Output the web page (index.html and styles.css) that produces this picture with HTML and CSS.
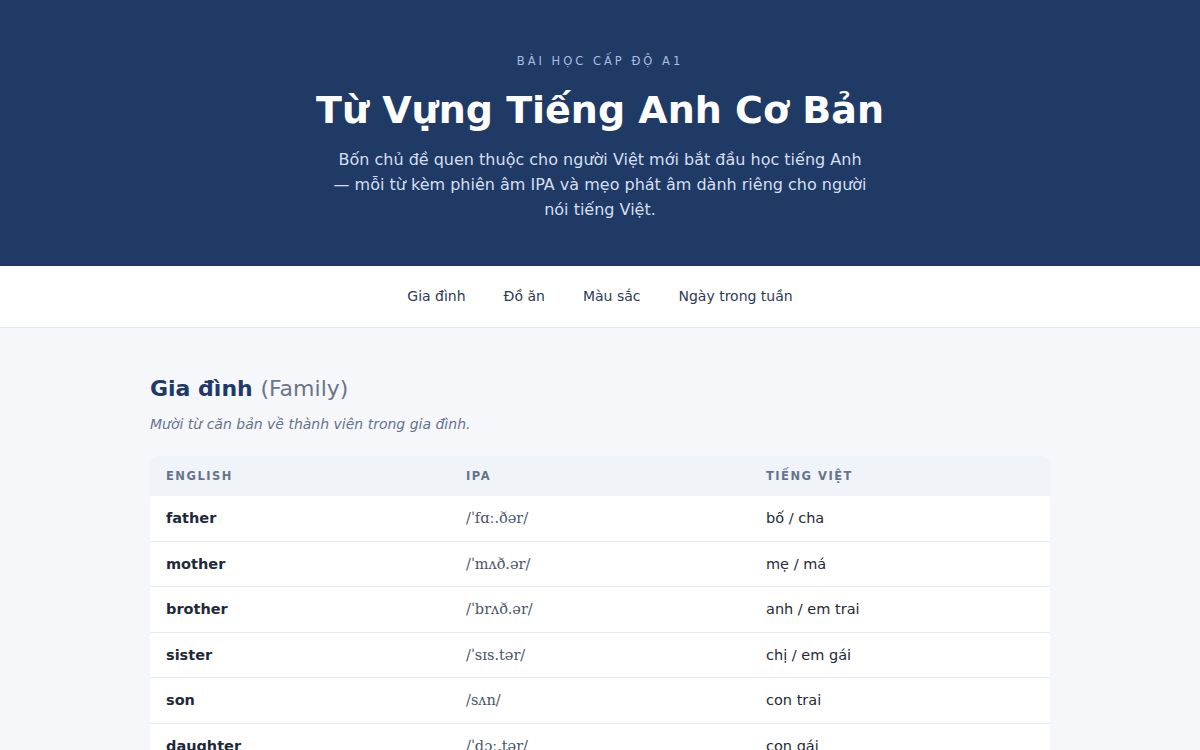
FILE: index.html
```html
<!DOCTYPE html>
<html lang="vi">
<head>
<meta charset="utf-8">
<title>Từ Vựng Tiếng Anh Cơ Bản</title>
<link rel="stylesheet" href="styles.css">
</head>
<body>
<header class="hero">
  <p class="kicker">Bài học cấp độ A1</p>
  <h1 class="title">Từ Vựng Tiếng Anh Cơ Bản</h1>
  <p class="lead">Bốn chủ đề quen thuộc cho người Việt mới bắt đầu học tiếng Anh — mỗi từ kèm phiên âm IPA và mẹo phát âm dành riêng cho người nói tiếng Việt.</p>
</header>
<nav class="topics">
  <a href="#family">Gia đình</a>
  <a href="#food">Đồ ăn</a>
  <a href="#colors">Màu sắc</a>
  <a href="#days">Ngày trong tuần</a>
</nav>
<main class="content">
  <section class="topic" id="family">
    <h2 class="topic-title">Gia đình <span class="topic-en">(Family)</span></h2>
    <p class="topic-desc">Mười từ căn bản về thành viên trong gia đình.</p>
    <div class="card">
      <table class="vocab">
        <thead>
          <tr><th>English</th><th>IPA</th><th>Tiếng Việt</th></tr>
        </thead>
        <tbody>
          <tr><td class="en">father</td><td class="ipa">/ˈfɑː.ðər/</td><td class="vi">bố / cha</td></tr>
          <tr><td class="en">mother</td><td class="ipa">/ˈmʌð.ər/</td><td class="vi">mẹ / má</td></tr>
          <tr><td class="en">brother</td><td class="ipa">/ˈbrʌð.ər/</td><td class="vi">anh / em trai</td></tr>
          <tr><td class="en">sister</td><td class="ipa">/ˈsɪs.tər/</td><td class="vi">chị / em gái</td></tr>
          <tr><td class="en">son</td><td class="ipa">/sʌn/</td><td class="vi">con trai</td></tr>
          <tr><td class="en">daughter</td><td class="ipa">/ˈdɔː.tər/</td><td class="vi">con gái</td></tr>
          <tr><td class="en">grandfather</td><td class="ipa">/ˈɡræn.fɑː.ðər/</td><td class="vi">ông</td></tr>
          <tr><td class="en">grandmother</td><td class="ipa">/ˈɡræn.mʌð.ər/</td><td class="vi">bà</td></tr>
        </tbody>
      </table>
    </div>
  </section>
</main>
</body>
</html>
```

FILE: styles.css
```css
* { box-sizing: border-box; }
html, body { margin: 0; padding: 0; }
body {
  font-family: "DejaVu Sans", "Noto Sans", sans-serif;
  background: #f5f7fb;
  color: #1f2937;
}
.hero {
  background: #203a66;
  text-align: center;
  padding: 53px 20px 44px;
}
.kicker {
  margin: 0;
  font-size: 11.5px;
  line-height: 16px;
  letter-spacing: 3px;
  text-transform: uppercase;
  color: #a9bde0;
}
.title {
  margin: 17px 0 13px;
  font-size: 38px;
  line-height: 48px;
  font-weight: 700;
  color: #ffffff;
}
.lead {
  margin: 0 auto;
  max-width: 540px;
  font-size: 16px;
  line-height: 25px;
  color: #d5dff0;
}
.topics {
  background: #ffffff;
  border-bottom: 1px solid #e2e8f0;
  display: flex;
  justify-content: center;
  gap: 38px;
  padding: 20px 0 21px;
}
.topics a {
  font-size: 14px;
  line-height: 20px;
  color: #2d3a55;
  text-decoration: none;
}
.content {
  width: 900px;
  margin: 0 auto;
  padding-top: 46px;
}
.topic-title {
  margin: 0;
  font-size: 22px;
  line-height: 30px;
  font-weight: 700;
  color: #1f3a68;
}
.topic-en {
  font-weight: 400;
  color: #6b7587;
}
.topic-desc {
  margin: 10px 0 22px;
  font-size: 14px;
  line-height: 20px;
  font-style: italic;
  color: #64748b;
}
.card {
  background: #ffffff;
  border-radius: 8px;
  box-shadow: 0 1px 2px rgba(15, 23, 42, 0.04);
  overflow: hidden;
}
.vocab {
  width: 100%;
  border-collapse: collapse;
  table-layout: fixed;
}
.vocab th {
  background: #f0f4f9;
  text-align: left;
  font-size: 11.5px;
  line-height: 16px;
  font-weight: 700;
  letter-spacing: 1.5px;
  text-transform: uppercase;
  color: #64748b;
  padding: 12px 16px;
}
.vocab td {
  padding: 12px 16px;
  font-size: 14.5px;
  line-height: 20.5px;
  border-top: 1px solid #e8edf3;
}
.vocab tbody tr:first-child td { border-top: none; }
.en { font-weight: 700; color: #1e293b; }
.ipa {
  font-family: "DejaVu Serif", serif;
  font-size: 14.5px;
  color: #475569;
}
.vi { color: #1f2937; }
```
